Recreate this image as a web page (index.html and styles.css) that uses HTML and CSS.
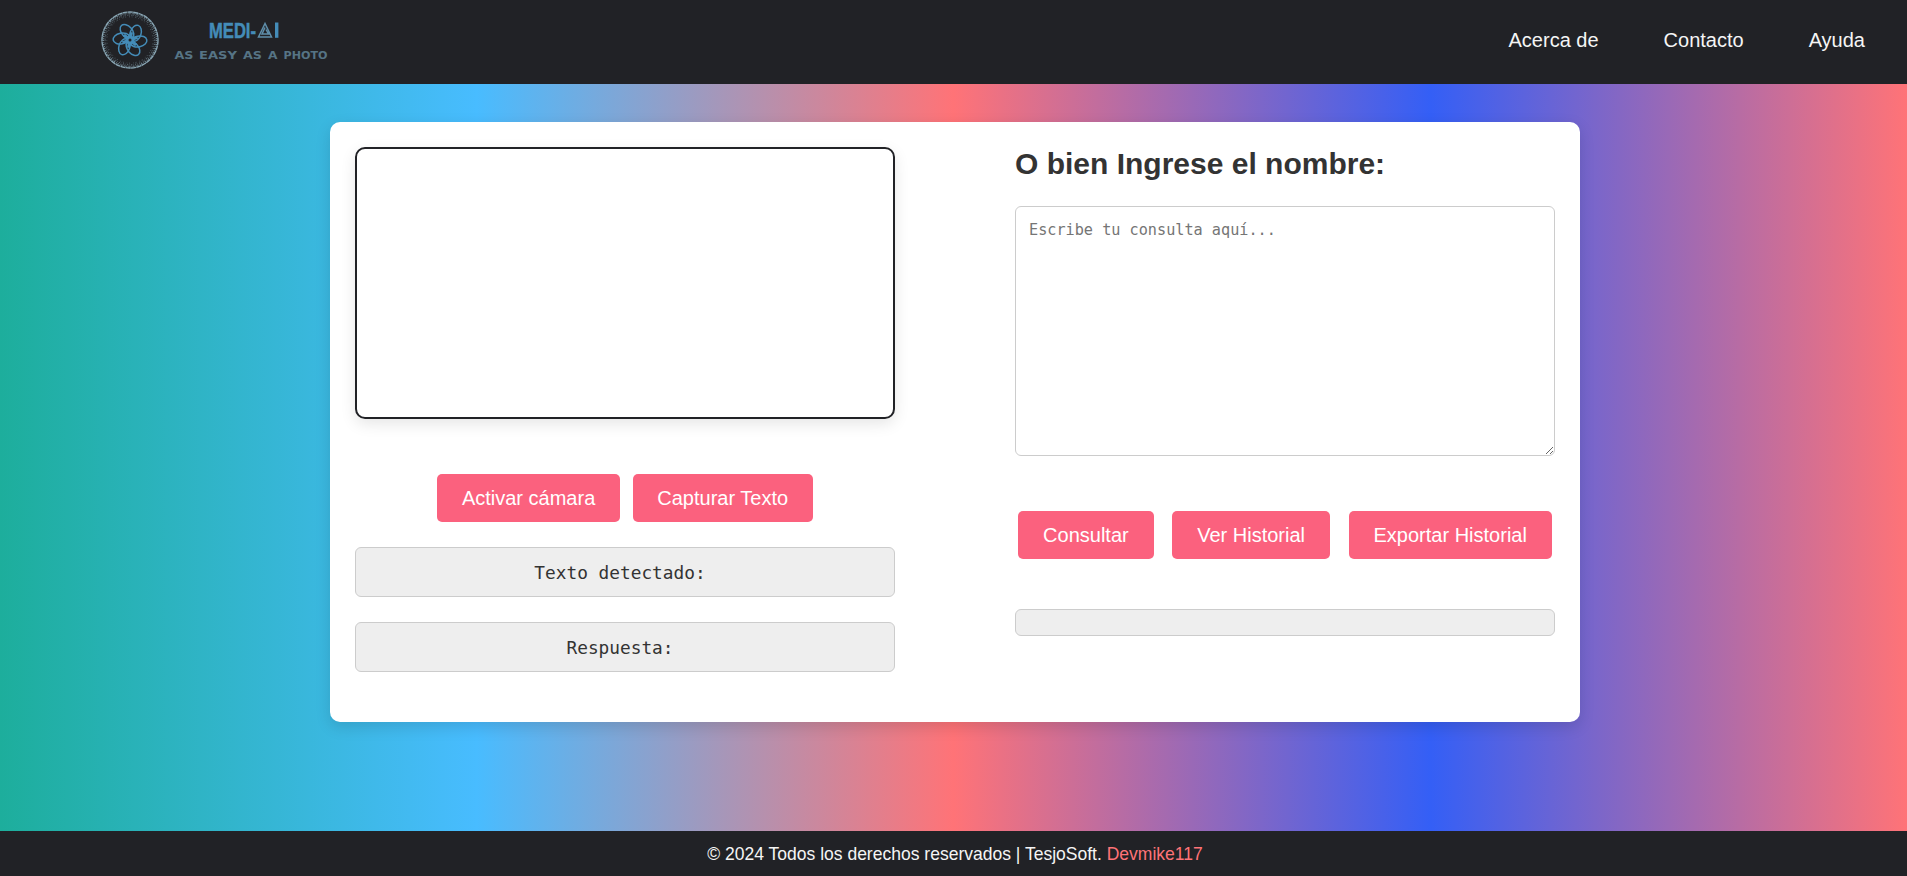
FILE: index.html
```html
<!DOCTYPE html>
<html lang="es">
<head>
<meta charset="utf-8">
<title>MEDI-AI</title>
<link rel="stylesheet" href="styles.css">
</head>
<body>
<header class="header">
  <a class="logo" href="#" aria-label="MEDI-AI">
    <svg class="logo-svg" width="230" height="70" viewBox="0 0 230 70">
      <g fill="none" stroke="#8aa7b5">
        <circle cx="30" cy="33" r="28" stroke-width="1.4" stroke-dasharray="5 .4"/>
        <circle cx="30" cy="33" r="26.6" stroke-width="1.6" stroke-dasharray="1.2 .9 .7 1.3" opacity=".75"/>
        <circle cx="30" cy="33" r="24.8" stroke-width="1.3" stroke-dasharray=".8 1.7 .5 1.1" opacity=".6"/>
        <circle cx="30" cy="33" r="23.2" stroke-width="1" stroke-dasharray=".6 3 .9 2" opacity=".5"/>
      </g>
      <g fill="none" stroke="#448cb8" stroke-width="1.500">
        <path stroke-width="3.200" d="M30 33 31.400 25.200M30 33 37.500 30.300M30 33 36.100 38.100M30 33 28.600 40.800M30 33 22.500 35.700M30 33 23.900 27.900"/>
        <ellipse cx="30" cy="24.200" rx="5.400" ry="8.300" transform="rotate(-20 30 33) rotate(-22 30 24.200)"/>
        <ellipse cx="30" cy="24.200" rx="5.400" ry="8.300" transform="rotate(40 30 33) rotate(-22 30 24.200)"/>
        <ellipse cx="30" cy="24.200" rx="5.400" ry="8.300" transform="rotate(100 30 33) rotate(-22 30 24.200)"/>
        <ellipse cx="30" cy="24.200" rx="5.400" ry="8.300" transform="rotate(160 30 33) rotate(-22 30 24.200)"/>
        <ellipse cx="30" cy="24.200" rx="5.400" ry="8.300" transform="rotate(220 30 33) rotate(-22 30 24.200)"/>
        <ellipse cx="30" cy="24.200" rx="5.400" ry="8.300" transform="rotate(280 30 33) rotate(-22 30 24.200)"/>
        <circle cx="30" cy="33" r="3" fill="#212226" stroke-width="3"/>
      </g>
      <text class="logo-name" x="109" y="30.500" textLength="47" lengthAdjust="spacingAndGlyphs">MEDI-</text>
      <path d="M165 16.500 158.500 30H171.500ZM165 20.500 162 27H168.500L166 22.500" fill="none" stroke="#5f8fab" stroke-width="1.500"/>
      <rect x="175" y="15.500" width="3.400" height="15.300" fill="#448cb8"/>
      <g class="logo-tag">
        <text x="74.500" y="51.500" textLength="19" lengthAdjust="spacingAndGlyphs">AS</text>
        <text x="99" y="51.500" textLength="38" lengthAdjust="spacingAndGlyphs">EASY</text>
        <text x="143" y="51.500" textLength="19" lengthAdjust="spacingAndGlyphs">AS</text>
        <text x="168" y="51.500" textLength="9.500" lengthAdjust="spacingAndGlyphs">A</text>
        <text x="183.500" y="51.500" textLength="44" lengthAdjust="spacingAndGlyphs">PHOTO</text>
      </g>
    </svg>
  </a>
  <nav class="nav">
    <a href="#">Acerca de</a>
    <a href="#">Contacto</a>
    <a href="#">Ayuda</a>
  </nav>
</header>
<main class="main">
  <div class="card">
    <section class="column">
      <div class="video"></div>
      <div class="buttons buttons-camera">
        <button class="btn">Activar cámara</button>
        <button class="btn">Capturar Texto</button>
      </div>
      <div class="result">Texto detectado:</div>
      <div class="result">Respuesta:</div>
    </section>
    <section class="column">
      <h2 class="title">O bien Ingrese el nombre:</h2>
      <textarea class="query" placeholder="Escribe tu consulta aquí..."></textarea>
      <div class="buttons buttons-query">
        <button class="btn">Consultar</button>
        <button class="btn">Ver Historial</button>
        <button class="btn">Exportar Historial</button>
      </div>
      <div class="result result-empty"></div>
    </section>
  </div>
</main>
<footer class="footer">© 2024 Todos los derechos reservados | TesjoSoft. <a href="#">Devmike117</a></footer>
</body>
</html>
```
FILE: styles.css
```css
* { box-sizing: border-box; }
body {
  margin: 0;
  height: 100vh;
  display: flex;
  flex-direction: column;
  overflow: hidden;
  font-family: "Liberation Sans", Arial, sans-serif;
  color: #333;
  background: linear-gradient(to right, #1dae9c, #48bcff 25%, #ff7377 50%, #345ff6 75%, #ff7377);
}
.header {
  height: 84px;
  flex: none;
  display: flex;
  align-items: center;
  justify-content: space-between;
  padding: 0 42px 0 100px;
  background: #212226;
}
.logo { display: flex; height: 70px; }
.logo-svg { display: block; }
.logo-name { font: bold 21.500px "Liberation Sans", sans-serif; fill: #448cb8; stroke: #448cb8; stroke-width: .5px; }
.logo-tag { font: bold 10px "DejaVu Sans", sans-serif; fill: #567485; }
.nav { display: flex; gap: 65px; }
.nav a { color: #f5f5f5; font-size: 20px; line-height: 28px; text-decoration: none; margin-top: -4px; }
.main { flex: 1; padding: 38px 0 0 3px; }
.card {
  width: 1250px;
  height: 600px;
  margin: 0 auto;
  padding: 25px;
  display: flex;
  justify-content: space-between;
  background: #fff;
  border-radius: 10px;
  box-shadow: 0 5px 15px rgba(0, 0, 0, .13);
}
.column { width: 540px; display: flex; flex-direction: column; }
.video {
  height: 272px;
  border: 2px solid #212226;
  border-radius: 10px;
  box-shadow: 0 5px 15px rgba(0, 0, 0, .1);
}
.buttons { display: flex; justify-content: center; margin-top: 55px; }
.buttons-camera { gap: 13px; }
.buttons-camera .btn { padding: 0 24.500px; }
.buttons-query { gap: 18.5px; margin-bottom: 25px; }
.btn {
  height: 48px;
  padding: 0 25px;
  border: 0;
  border-radius: 5px;
  background: #fb617e;
  color: #fff;
  font: 20px "Liberation Sans", Arial, sans-serif;
}
.result {
  height: 50px;
  margin-top: 25px;
  padding-right: 10px;
  border: 1px solid #ccc;
  border-radius: 6px;
  background: #eee;
  text-align: center;
  font: 17.8px/50px "DejaVu Sans Mono", monospace;
  color: #333;
}
.result-empty { height: 27px; }
.title { margin: 0; height: 59px; font-size: 30px; line-height: 34px; color: #333; }
.query {
  display: block;
  width: 100%;
  height: 250px;
  margin: 0;
  padding: 14px 13px;
  border: 1px solid #ccc;
  border-radius: 6px;
  font: 15.200px "DejaVu Sans Mono", monospace;
}
.query::placeholder { color: #757575; }
.footer {
  height: 45px;
  flex: none;
  padding-left: 3px;
  background: #212226;
  color: #f5f5f5;
  text-align: center;
  font-size: 17.520px;
  line-height: 46px;
}
.footer a { color: #ff7377; text-decoration: none; }
```
